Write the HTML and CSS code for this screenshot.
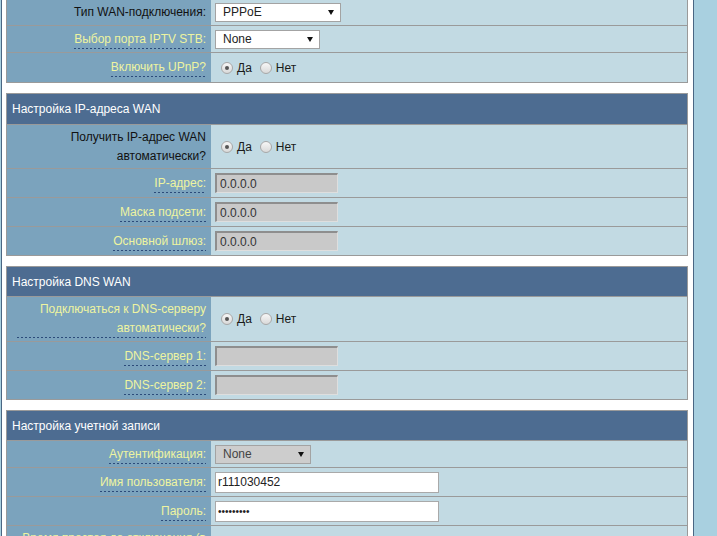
FILE: index.html
```html
<!DOCTYPE html>
<html lang="ru">
<head>
<meta charset="utf-8">
<title>Интернет — настройки WAN</title>
<link rel="stylesheet" href="styles.css">
</head>
<body>
<div class="panel">

  <section class="form-table first">
    <div class="row h26">
      <div class="label"><span class="plain">Тип WAN-подключения:</span></div>
      <div class="value">
        <div class="select w126"><span>PPPoE</span><svg viewBox="0 0 6 5"><polygon points="0,0 6,0 3,5"/></svg></div>
      </div>
    </div>
    <div class="row h27">
      <div class="label"><span class="hint">Выбор порта IPTV STB:</span></div>
      <div class="value">
        <div class="select w105"><span>None</span><svg viewBox="0 0 6 5"><polygon points="0,0 6,0 3,5"/></svg></div>
      </div>
    </div>
    <div class="row h30">
      <div class="label"><span class="hint">Включить UPnP?</span></div>
      <div class="value">
        <span class="radio on"></span><span class="opt">Да</span>
        <span class="radio second"></span><span class="opt">Нет</span>
      </div>
    </div>
  </section>

  <section class="form-table">
    <div class="head h30">Настройка IP-адреса WAN</div>
    <div class="row h44">
      <div class="label"><span class="plain">Получить IP-адрес WAN автоматически?</span></div>
      <div class="value">
        <span class="radio on"></span><span class="opt">Да</span>
        <span class="radio second"></span><span class="opt">Нет</span>
      </div>
    </div>
    <div class="row h29">
      <div class="label"><span class="hint">IP-адрес:</span></div>
      <div class="value"><input class="ip" type="text" value="0.0.0.0" disabled></div>
    </div>
    <div class="row h29">
      <div class="label"><span class="hint">Маска подсети:</span></div>
      <div class="value"><input class="ip" type="text" value="0.0.0.0" disabled></div>
    </div>
    <div class="row h29">
      <div class="label"><span class="hint">Основной шлюз:</span></div>
      <div class="value"><input class="ip" type="text" value="0.0.0.0" disabled></div>
    </div>
  </section>

  <section class="form-table">
    <div class="head h29">Настройка DNS WAN</div>
    <div class="row h45">
      <div class="label"><span class="hint">Подключаться к DNS-серверу автоматически?</span></div>
      <div class="value">
        <span class="radio on"></span><span class="opt">Да</span>
        <span class="radio second"></span><span class="opt">Нет</span>
      </div>
    </div>
    <div class="row h29">
      <div class="label"><span class="hint">DNS-сервер 1:</span></div>
      <div class="value"><input class="ip" type="text" value="" disabled></div>
    </div>
    <div class="row h29">
      <div class="label"><span class="hint">DNS-сервер 2:</span></div>
      <div class="value"><input class="ip" type="text" value="" disabled></div>
    </div>
  </section>

  <section class="form-table">
    <div class="head h29">Настройка учетной записи</div>
    <div class="row h27">
      <div class="label"><span class="hint">Аутентификация:</span></div>
      <div class="value">
        <div class="select w96 off"><span>None</span><svg viewBox="0 0 6 5"><polygon points="0,0 6,0 3,5"/></svg></div>
      </div>
    </div>
    <div class="row h29">
      <div class="label"><span class="hint">Имя пользователя:</span></div>
      <div class="value"><input class="txt" type="text" value="r111030452"></div>
    </div>
    <div class="row h29">
      <div class="label"><span class="hint">Пароль:</span></div>
      <div class="value"><input class="txt pwd" type="password" value="r11103045"></div>
    </div>
    <div class="row h45">
      <div class="label"><span class="hint">Время простоя до отключения (в секундах):</span></div>
      <div class="value"></div>
    </div>
  </section>

</div>
</body>
</html>
```
FILE: styles.css
```css
* {
  box-sizing: border-box;
}

html,
body {
  margin: 0;
  padding: 0;
}

body {
  background: #a9d0e0;
  font-family: "Liberation Sans", Arial, sans-serif;
  font-size: 12px;
  color: #000;
}

.panel {
  width: 693px;
  min-height: 600px;
  margin-left: 1px;
  padding: 0 5px 0 4px;
  background: #fff;
  border-left: 1px solid #4a6683;
  border-right: 1px solid #4a6683;
}

.form-table {
  border: 1px solid #9a9a9a;
  background: #c2dae3;
  margin-bottom: 10px;
}

.form-table.first {
  margin-top: -2px;
}

.head {
  display: flex;
  align-items: center;
  padding-left: 5px;
  background: #4d6c91;
  color: #fff;
}

.row {
  display: grid;
  grid-template-columns: 204px 1fr;
  border-top: 1px solid #9a9a9a;
}

.row:first-child {
  border-top: 0;
}

/* heights include the 1px top separator */
.h26 { height: 26px; }
.h27 { height: 27px; }
.h29 { height: 29px; }
.h30 { height: 30px; }
.h44 { height: 44px; }
.h45 { height: 45px; }

.label {
  display: flex;
  align-items: center;
  justify-content: flex-end;
  text-align: right;
  padding: 0 5px 0 10px;
  line-height: 19px;
  background: #7ba3bd;
}

.plain {
  color: #111;
}

.hint {
  color: #eef4a0;
  background-image: linear-gradient(to right, #2c4b7a 50%, transparent 50%);
  background-size: 4px 1px;
  background-repeat: repeat-x;
  background-position: 0 100%;
}

.value {
  display: flex;
  align-items: center;
  padding-left: 4px;
  color: #1a1a1a;
}

/* fake drop-down */
.select {
  display: flex;
  align-items: center;
  justify-content: space-between;
  height: 19px;
  padding: 0 6px 0 7px;
  background: #fff;
  border: 1px solid #a3a3a3;
  color: #222;
}

.select svg {
  width: 6px;
  height: 5px;
  fill: #111;
}

.select.off {
  background: #cdcdcd;
  color: #444;
}

.w126 { width: 126px; }
.w105 { width: 105px; }
.w96 { width: 96px; }

/* radio buttons */
.radio {
  position: relative;
  flex: none;
  width: 12px;
  height: 12px;
  margin: 0 4px 0 6px;
  border-radius: 50%;
  border: 1px solid #a8a8a8;
  background: linear-gradient(#f7f7f7, #d9d9d9);
}

.radio.second {
  margin-left: 8px;
}

.radio.on::after {
  content: "";
  position: absolute;
  left: 3px;
  top: 3px;
  width: 4px;
  height: 4px;
  border-radius: 50%;
  background: #555;
}

.opt {
  line-height: 14px;
}

/* text inputs */
.ip,
.txt {
  margin: 0;
  font-family: "Liberation Sans", Arial, sans-serif;
  font-size: 12px;
  outline: none;
}

.ip {
  width: 123px;
  height: 20px;
  padding: 0 0 0 3px;
  background: #c9c9c9;
  color: #333;
  border-style: solid;
  border-width: 2px 1px 1px 2px;
  border-color: #8e8e8e #dedede #dedede #8e8e8e;
}

.txt {
  width: 224px;
  height: 21px;
  padding: 0 0 0 2px;
  background: #fff;
  color: #222;
  border: 1px solid #a9a9a9;
}

.pwd {
  font-size: 10px;
  letter-spacing: 0;
}
```
